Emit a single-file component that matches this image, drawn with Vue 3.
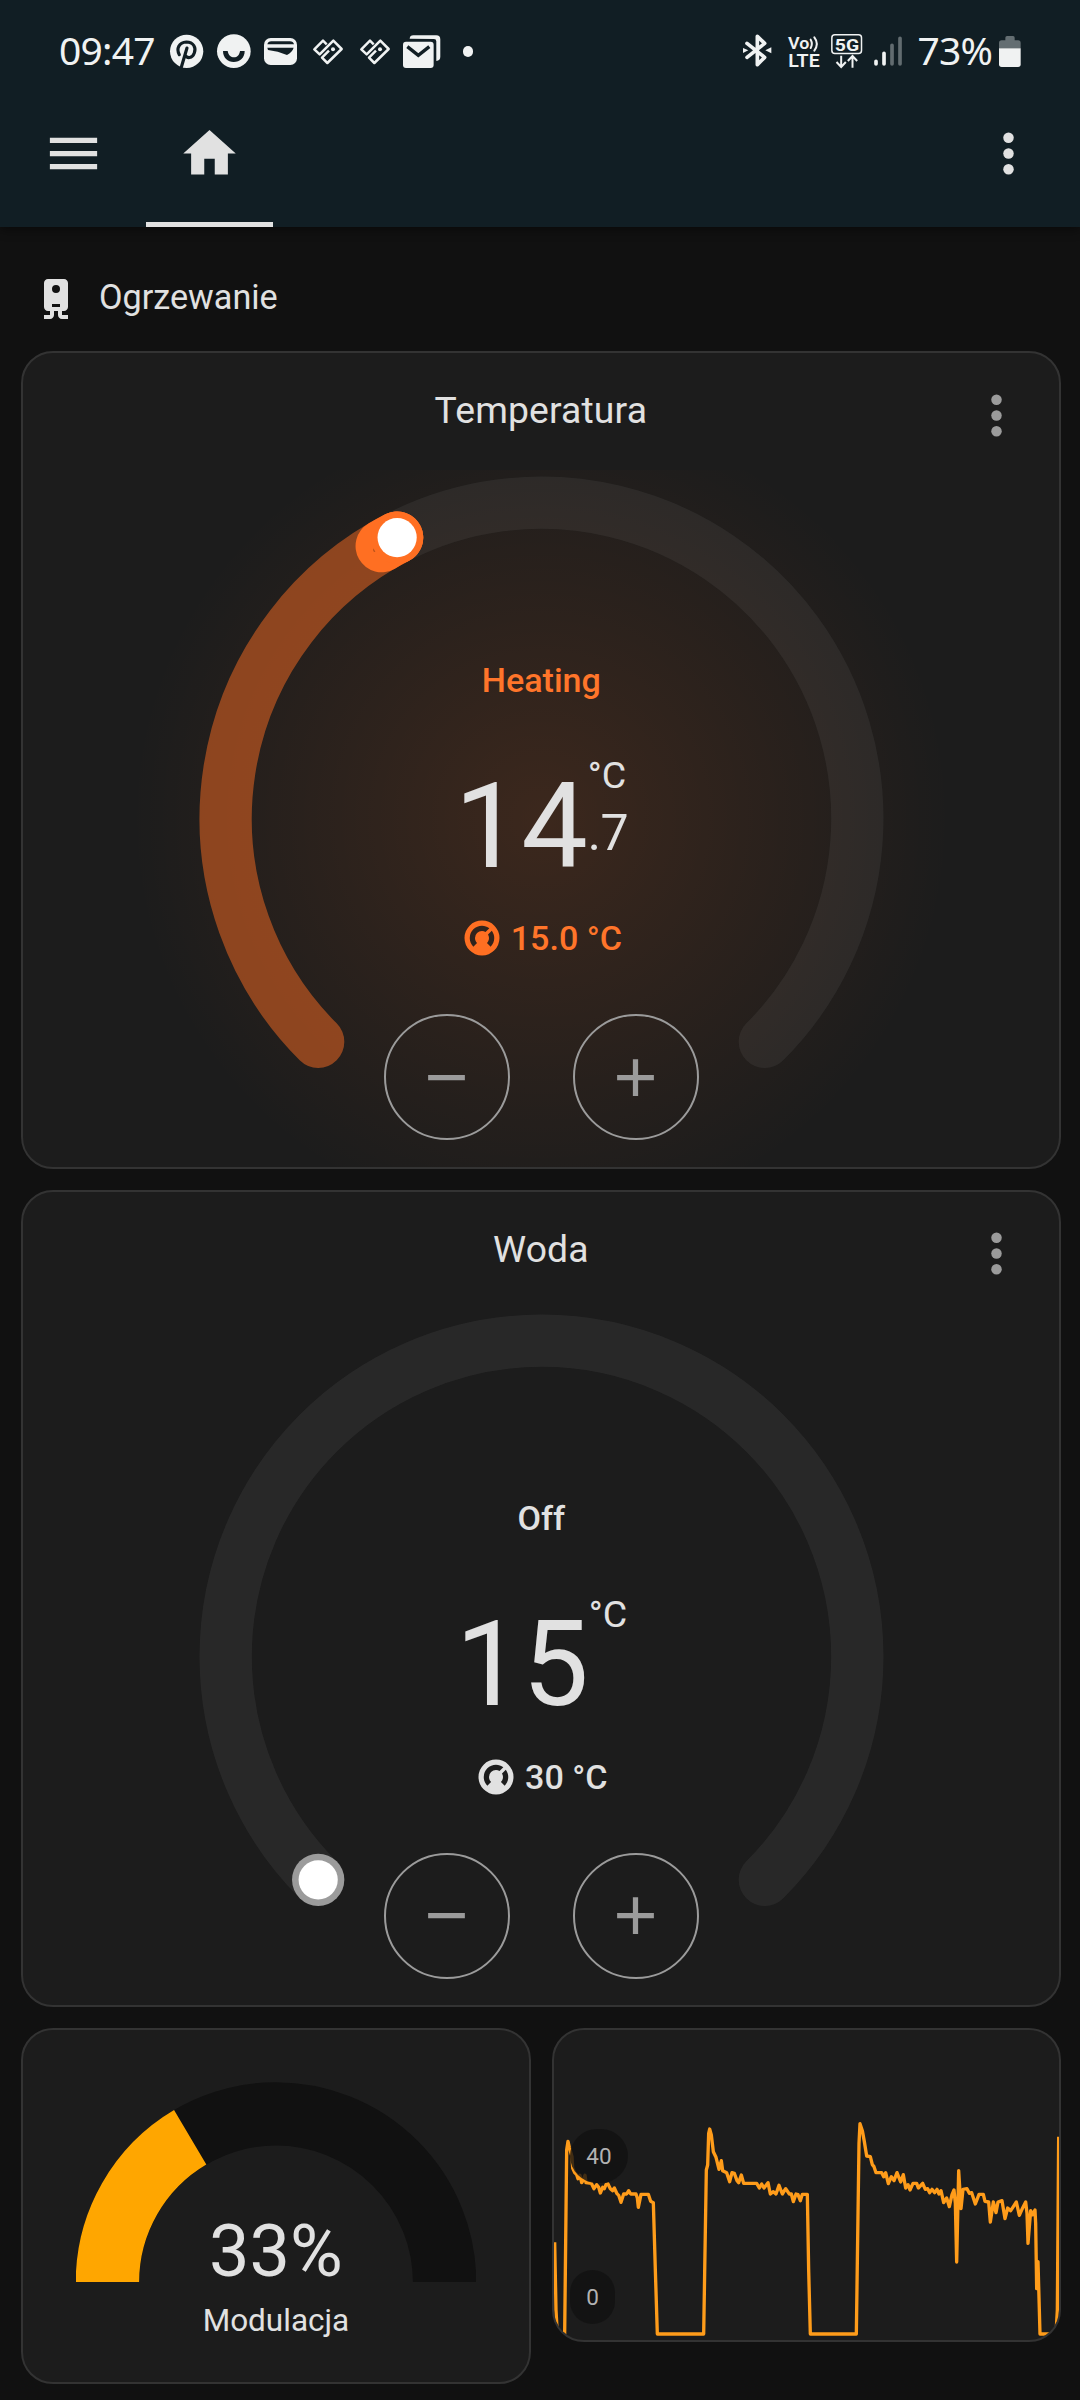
<script setup>
const CX = 160
const R = 145

function polar(deg, r = R) {
  const a = (deg * Math.PI) / 180
  return [CX + r * Math.cos(a), CX + r * Math.sin(a)]
}

function arc(from, to) {
  const [x1, y1] = polar(from)
  const [x2, y2] = polar(to)
  return `M${x1} ${y1}A${R} ${R} 0 ${to - from > 180 ? 1 : 0} 1 ${x2} ${y2}`
}

const cards = [
  {
    title: 'Temperatura', state: 'Heating', whole: '14', fraction: '.7', target: '15.0 °C',
    active: true, current: 239.6, setpoint: 242.8,
  },
  {
    title: 'Woda', state: 'Off', whole: '15', fraction: '', target: '30 °C',
    active: false, current: 135, setpoint: 135,
  },
].map((c) => ({ ...c, thumb: polar(c.setpoint), mark: polar(c.current - 1.4) }))

const modulation = 33
const gaugeEnd = Math.PI * (1 - modulation / 100)
const gaugeX = 200 + 168.6 * Math.cos(gaugeEnd)
const gaugeY = 200.4 - 168.6 * Math.sin(gaugeEnd)

const history = [
  [44, 697], [48, 900], [52, 972], [74, 972], [80, 420], [84, 394], [88, 412], [96, 440], [98, 474], [104, 488],
  [110, 494], [114, 506], [120, 496], [125, 518], [131, 508], [135, 496], [138, 518], [154, 520], [162, 536],
  [170, 524], [176, 532], [181, 549], [188, 532], [193, 536], [198, 524], [204, 522], [211, 536], [218, 542],
  [223, 534], [231, 551], [236, 556], [243, 577], [251, 552], [260, 552], [266, 542], [272, 552], [288, 552],
  [292, 564], [295, 592], [303, 553], [325, 553], [332, 574], [340, 578], [346, 780], [352, 972], [491, 972],
  [499, 480], [503, 465], [506, 370], [509, 357], [514, 375], [520, 425], [528, 442], [537, 478], [544, 452],
  [548, 482], [560, 488], [569, 515], [576, 488], [583, 490], [591, 512], [596, 518], [604, 495], [611, 520],
  [650, 520], [658, 534], [665, 522], [672, 534], [684, 518], [691, 552], [700, 545], [708, 552], [717, 526],
  [727, 552], [737, 536], [748, 552], [754, 552], [760, 575], [768, 552], [774, 554], [781, 572], [787, 553],
  [802, 553], [806, 780], [811, 972], [949, 972], [957, 400], [960, 341], [967, 362], [973, 395], [980, 438],
  [991, 440], [997, 464], [1002, 470], [1008, 488], [1025, 488], [1031, 500], [1037, 488], [1045, 521],
  [1054, 500], [1062, 512], [1071, 488], [1082, 516], [1090, 494], [1097, 534], [1104, 524], [1110, 540],
  [1119, 520], [1130, 520], [1135, 534], [1148, 520], [1156, 538], [1163, 536], [1169, 548], [1176, 538],
  [1184, 548], [1191, 538], [1197, 552], [1203, 542], [1211, 578], [1220, 564], [1228, 590], [1236, 554],
  [1242, 540], [1246, 580], [1250, 756], [1256, 482], [1263, 596], [1269, 538], [1281, 536], [1288, 550],
  [1295, 548], [1306, 582], [1317, 553], [1330, 553], [1335, 574], [1346, 576], [1351, 636], [1360, 576],
  [1368, 608], [1374, 576], [1386, 572], [1395, 626], [1403, 594], [1412, 602], [1420, 590], [1429, 576],
  [1438, 616], [1446, 598], [1457, 576], [1461, 610], [1464, 700], [1472, 602], [1478, 614], [1485, 600],
  [1487, 640], [1490, 836], [1494, 755], [1500, 972], [1548, 972], [1552, 900], [1556, 380],
]
const historyPath = history.map(([x, y], i) => `${i ? 'L' : 'M'}${x} ${y}`).join('')
</script>

<template>
  <div class="screen">
    <header class="top">
      <div class="status">
        <span class="clock">09:47</span>
        <svg class="st pin" width="33.3" height="35" viewBox="390 42 100 105">
          <circle cx="440" cy="94" r="50" fill="#f0f2f2" />
          <path d="M418 104C408 86 417 67 439 66C461 66 469 83 463 99C457 116 441 116 435 105M441 84L424 142" fill="none" stroke="#111e24" stroke-width="9.5" stroke-linecap="round" />
        </svg>
        <svg class="st smile" width="33.7" height="35" viewBox="530 42 101 105">
          <circle cx="580.5" cy="93.500" r="50.500" fill="#f0f2f2" />
          <path d="M548 93H562C564 106 572 112 581 112C590 112 597 106 599 93H613C613 113 599 126 580 126C562 126 548 113 548 93Z" fill="#111e24" />
        </svg>
        <svg class="st wallet" width="33" height="35" viewBox="672 42 99 105">
          <rect x="672" y="54" width="99" height="81" rx="20" fill="#f0f2f2" />
          <path d="M682 73Q684 64 694 64H750Q760 64 762 73ZM682 83H761Q757 96 741 105Q714 93 684 90Z" fill="#111e24" />
        </svg>
        <svg v-for="n in 2" :key="n" class="st tag" :class="'tag' + n" width="30" height="35" viewBox="818 42 90 105">
          <path d="M859 73L848 62L822 88L838 103L879 62L904 87L861 129L845 113L866 92" fill="none" stroke="#f0f2f2" stroke-width="7.500" stroke-linejoin="round" />
          <circle cx="878" cy="88" r="6" fill="#f0f2f2" />
        </svg>
        <svg class="st mails" width="37.3" height="35" viewBox="1088 42 112 105">
          <path d="M1108 56Q1109 46 1119 46H1188Q1200 46 1200 58V110Q1200 121 1188 123V64Q1188 57 1181 57Z" fill="#f0f2f2" />
          <rect x="1088" y="65" width="92" height="79" rx="9" fill="#f0f2f2" />
          <path d="M1101 80L1134 106L1167 80" fill="none" stroke="#111e24" stroke-width="10" />
        </svg>
        <i class="more"></i>

        <svg class="st bt" width="28.700" height="35" viewBox="67 42 86 105">
          <path d="M79 70L132 112L110 134V49L132 70L79 112" fill="none" stroke="#f0f2f2" stroke-width="11" stroke-linecap="round" stroke-linejoin="round" />
          <path d="M67 84L83 91L67 99ZM152 82L134 91L152 100Z" fill="#f0f2f2" />
        </svg>
        <svg class="st volte" width="33" height="35" viewBox="201 40 99 105">
          <g fill="#f0f2f2" font-family="Roboto, sans-serif" font-weight="600">
            <text x="201" y="84" font-size="51" textLength="64" lengthAdjust="spacingAndGlyphs">Vo</text>
            <text x="202" y="138" font-size="54" textLength="94" lengthAdjust="spacingAndGlyphs">LTE</text>
          </g>
          <path d="M269 57Q276 69 269 82M280 50Q295 69 280 90" fill="none" stroke="#f0f2f2" stroke-width="6" stroke-linecap="round" />
        </svg>
        <svg class="st five" width="31.700" height="35" viewBox="330.500 36 95 105">
          <rect x="333" y="38.500" width="89" height="56" rx="9" fill="none" stroke="#f0f2f2" stroke-width="4.500" />
          <text x="342" y="86" font-size="51" font-family="Roboto, sans-serif" font-weight="700" fill="#f0f2f2" textLength="73" lengthAdjust="spacingAndGlyphs">5G</text>
          <path d="M361 101V135M347 120L361 135L375 120M395 137V103M381 117L395 102L409 117" fill="none" stroke="#f0f2f2" stroke-width="6" />
        </svg>
        <svg class="st signal" width="28.700" height="35" viewBox="462 40 86 105">
          <g stroke-width="11" stroke-linecap="round">
            <path d="M468 122V130M492 98V130" stroke="#f0f2f2" />
            <path d="M516 74V130M540 53V130" stroke="#626c70" />
          </g>
        </svg>
        <span class="percent">73%</span>
        <svg class="st battery" width="21.700" height="35" viewBox="836 39 65 105">
          <path d="M855 50Q855 45 860 45H878Q883 45 883 50V58H893Q901 58 901 66V82H836V66Q836 58 844 58H855Z" fill="#646e72" />
          <path d="M836 82H901V130Q901 138 893 138H844Q836 138 836 130Z" fill="#f0f2f2" />
        </svg>
      </div>
      <nav class="toolbar">
        <svg class="menu" width="63" height="63" viewBox="0 0 24 24"><path d="M3,6H21V8H3V6M3,11H21V13H3V11M3,16H21V18H3V16Z" /></svg>
        <div class="tab">
          <svg width="63" height="63" viewBox="0 0 24 24"><path d="M10,20V14H14V20H19V12H22L12,3L2,12H5V20H10Z" /></svg>
        </div>
        <svg class="kebab" width="63" height="63" viewBox="0 0 24 24"><circle cx="12" cy="6" r="2" /><circle cx="12" cy="12" r="2" /><circle cx="12" cy="18" r="2" /></svg>
      </nav>
    </header>

    <main>
      <h1 class="section">
        <svg width="48" height="48" viewBox="0 0 24 24"><path d="M8,2C6.89,2 6,2.89 6,4V16C6,17.11 6.89,18 8,18H9V20H6V22H9C10.11,22 11,21.11 11,20V18H13V20C13,21.11 13.89,22 15,22H18V20H15V18H16C17.11,18 18,17.11 18,16V4C18,2.89 17.11,2 16,2H8M12,4.97A2,2 0 0,1 14,6.97A2,2 0 0,1 12,8.97A2,2 0 0,1 10,6.97A2,2 0 0,1 12,4.97M10,14.5H14V16H10V14.5Z" /></svg>
        <span>Ogrzewanie</span>
      </h1>

      <section v-for="c in cards" :key="c.title" class="card thermostat" :class="{ heating: c.active }">
        <div class="head">
          <h2>{{ c.title }}</h2>
          <svg width="63" height="63" viewBox="0 0 24 24"><circle cx="12" cy="6" r="2" /><circle cx="12" cy="12" r="2" /><circle cx="12" cy="18" r="2" /></svg>
        </div>
        <div class="dial">
          <svg class="ring" viewBox="0 0 320 320">
            <path class="track" :d="arc(c.setpoint, 405)" />
            <template v-if="c.active">
              <path class="fill" :d="arc(135, c.setpoint)" />
              <path class="span" :d="arc(c.current, c.setpoint)" />
              <circle class="mark" :cx="c.mark[0]" :cy="c.mark[1]" r="0.9" />
            </template>
            <circle class="halo" :cx="c.thumb[0]" :cy="c.thumb[1]" r="12" />
            <circle class="thumb" :cx="c.thumb[0]" :cy="c.thumb[1]" r="9" />
          </svg>
          <div class="info">
            <p class="state">{{ c.state }}</p>
            <div class="value">
              <span class="whole">{{ c.whole }}</span>
              <span class="side"><span class="unit">°C</span><span class="fraction">{{ c.fraction }}</span></span>
            </div>
            <p class="target">
              <svg width="42" height="42" viewBox="0 0 24 24"><path d="M16.95,16.95L14.83,14.83C15.55,14.1 16,13.1 16,12C16,11.26 15.79,10.57 15.43,10L17.6,7.81C18.5,9 19,10.43 19,12C19,13.93 18.22,15.68 16.95,16.95M12,5C13.57,5 15,5.5 16.19,6.4L14,8.56C13.43,8.21 12.74,8 12,8A4,4 0 0,0 8,12C8,13.1 8.45,14.1 9.17,14.83L7.05,16.95C5.78,15.68 5,13.93 5,12A7,7 0 0,1 12,5M12,2A10,10 0 0,0 2,12A10,10 0 0,0 12,22A10,10 0 0,0 22,12A10,10 0 0,0 12,2Z" /></svg>
              <span>{{ c.target }}</span>
            </p>
            <div class="buttons">
              <button aria-label="-"><svg width="63" height="63" viewBox="0 0 24 24"><path d="M19,13H5V11H19V13Z" /></svg></button>
              <button aria-label="+"><svg width="63" height="63" viewBox="0 0 24 24"><path d="M19,13H13V19H11V13H5V11H11V5H13V11H19V13Z" /></svg></button>
            </div>
          </div>
        </div>
      </section>

      <div class="pair">
        <section class="card modulation">
          <div class="half">
            <svg width="400" height="200.400" viewBox="0 0 400 200.400">
              <path d="M31.400 200.400A168.600 168.600 0 0 1 368.600 200.400" stroke="#111" />
              <path :d="`M31.400 200.400A168.600 168.600 0 0 1 ${gaugeX} ${gaugeY}`" stroke="#ffa600" />
            </svg>
            <span class="reading">{{ modulation }}%</span>
          </div>
          <p class="label">Modulacja</p>
        </section>
        <section class="card history">
          <svg viewBox="42 60 1515 930" preserveAspectRatio="none"><path :d="historyPath" /></svg>
          <div class="scale">
            <span>40</span>
            <span>0</span>
          </div>
        </section>
      </div>
    </main>
  </div>
</template>

<style>
body {
  margin: 0;
  background: #111;
}
</style>

<style scoped>
.screen {
  width: 1080px;
  height: 2400px;
  overflow: hidden;
  background: #111;
  color: #e1e1e1;
  font-family: Roboto, sans-serif;
}
.screen svg { display: block; flex: none; }
.screen .st { overflow: visible; }
h1, h2, p { margin: 0; font-weight: 400; }
.top {
  height: 227px;
  background: #111e24;
  box-shadow: 0 3px 10px rgba(0, 0, 0, 0.45);
}
.status {
  display: flex;
  align-items: center;
  height: 103px;
  padding: 0 59.300px 0 59px;
  color: #f0f2f2;
  font: 400 39px/44px "Noto Sans", sans-serif;
}
.clock { width: 111px; letter-spacing: -0.8px; padding-bottom: 3px; box-sizing: border-box; }
.smile { margin-left: 13.400px; }
.wallet { margin-left: 13.600px; }
.tag1 { margin-left: 15.700px; }
.tag2 { margin-left: 17px; }
.mails { margin-left: 13px; }
.more { width: 10.600px; height: 10.600px; margin-left: 22.700px; border-radius: 50%; background: #f0f2f2; }
.bt { margin-left: auto; }
.volte { margin-left: 16px; }
.five { margin-left: 10px; }
.signal { margin-left: 12px; }
.percent { width: 77px; margin-left: 14.500px; padding-bottom: 4px; letter-spacing: -0.8px; }
.battery { margin-left: 4.500px; }

.toolbar {
  display: flex;
  align-items: flex-start;
  height: 124px;
  padding: 0 40.500px 0 42px;
  fill: #e1e1e1;
}
.menu, .kebab { margin-top: 18.500px; }
.tab {
  display: flex;
  justify-content: center;
  box-sizing: border-box;
  width: 127px;
  height: 124px;
  margin-left: 41.300px;
  padding-top: 19px;
  border-bottom: 5px solid #e1e1e1;
}
.kebab { margin-left: auto; }

main { padding: 0 19.300px 0 21px; }
.section {
  display: flex;
  align-items: center;
  height: 124.300px;
  padding: 19px 0 0 10.500px;
  box-sizing: border-box;
  font-size: 34.200px;
  fill: #e1e1e1;
}
.section span { margin: -3px 0 0 19.500px; }

.card {
  box-sizing: border-box;
  border: 2px solid #333;
  border-radius: 32px;
  background: #1c1c1c;
  overflow: hidden;
}
.thermostat { height: 817.300px; margin-bottom: 21px; }
.head {
  display: grid;
  grid-template-columns: 1fr auto 1fr;
  align-items: start;
  height: 116.700px;
  box-sizing: border-box;
  padding: 0 31px;
}
.head h2 { grid-column: 2; padding-top: 36px; font-size: 37.300px; line-height: 42px; letter-spacing: 0.150px; }
.head svg { justify-self: end; margin-top: 30.500px; fill: #9b9b9b; }
.dial { display: grid; justify-items: center; height: 697px; padding-left: 1px; }
.heating .dial {
  background: radial-gradient(circle 410px at 50% 348.500px, rgba(255, 111, 34, 0.14), rgba(255, 111, 34, 0));
}
.ring, .info { grid-area: 1 / 1; }
.ring { width: 697px; height: 697px; fill: none; stroke-width: 24; stroke-linecap: round; }
.track { stroke: rgba(189, 189, 189, 0.08); }
.fill { stroke: #ff6f22; opacity: 0.49; }
.span { stroke: #ff6f22; }
.mark { fill: #b24e1a; }
.halo { fill: #9b9b9b; }
.heating .halo { fill: #ff6f22; }
.thumb { fill: #fff; }
.info { display: flex; flex-direction: column; align-items: center; padding-top: 188px; }
.state { font-size: 34.100px; font-weight: 500; line-height: 44px; }
.heating .state, .heating .target { color: #ff752a; fill: #ff6f22; }
.value { display: flex; height: 118px; margin-top: 66px; }
.whole { font-size: 118.500px; line-height: 118px; }
.side { display: flex; flex-direction: column; gap: 14.500px; margin-top: -10.500px; }
.unit { font-size: 37.500px; line-height: 37px; }
.fraction { font-size: 50px; line-height: 48px; height: 48px; letter-spacing: -0.500px; }
.target {
  display: flex;
  align-items: center;
  gap: 8px;
  margin-top: 31.500px;
  font-size: 34.100px;
  font-weight: 500;
  line-height: 42px;
  fill: #e1e1e1;
}
.buttons { display: flex; gap: 63px; margin-top: 55px; }
.buttons button {
  display: grid;
  place-items: center;
  box-sizing: border-box;
  width: 126px;
  height: 126px;
  padding: 0;
  border: 2px solid #9b9b9b;
  border-radius: 50%;
  background: none;
  fill: #9b9b9b;
}

.pair { display: flex; align-items: flex-start; gap: 21px; }
.modulation {
  width: 510px;
  height: 356.500px;
  padding-top: 52px;
  text-align: center;
}
.half { display: grid; justify-items: center; align-items: end; }
.half > * { grid-area: 1 / 1; }
.half svg { fill: none; stroke-width: 63.400; margin-bottom: 5.600px; }
.reading { font-size: 72px; line-height: 72px; }
.label { margin-top: 15.500px; font-size: 31.500px; line-height: 36px; }
.history { display: grid; width: 509px; height: 314px; }
.history > * { grid-area: 1 / 1; }
.history svg { width: 505px; height: 310px; }
.history path { fill: none; stroke: #ff9c1a; stroke-width: 10; stroke-linejoin: round; }
.scale {
  display: flex;
  flex-direction: column;
  align-items: flex-start;
  gap: 87px;
  padding: 99px 0 0 16.500px;
  color: #b2b2b2;
  font-size: 22.500px;
  line-height: 54px;
}
.scale span { padding: 0 16px; border-radius: 27px; background: rgba(17, 17, 17, 0.8); }
</style>
